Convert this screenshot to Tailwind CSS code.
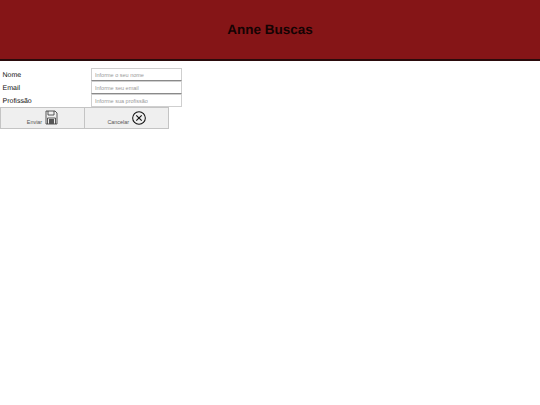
<!DOCTYPE html>
<html>
<head>
<meta charset="utf-8">
<script src="https://cdn.jsdelivr.net/npm/@tailwindcss/browser@4"></script>
</head>
<body class="bg-white font-['Liberation_Sans',Arial,sans-serif] text-black antialiased [text-rendering:geometricPrecision]">
<header class="h-[61px] bg-[#851517] border-b-2 border-[#2a0b0c] flex items-center justify-center">
  <h1 class="text-[13.5px] leading-none font-bold text-[#140303]">Anne Buscas</h1>
</header>
<main class="pt-[7px]">
  <div class="flex h-[13px] items-center"><label class="w-[91px] pl-[2.5px] pt-[2px] text-[7px] leading-none text-[#111]">Nome</label><input class="w-[91px] h-[13px] border border-[#cfcfcf] border-b-[#8a8a8a] px-[3px] text-[5.5px] placeholder:text-[#999] bg-white" placeholder="Informe o seu nome"></div>
  <div class="flex h-[13px] items-center"><label class="w-[91px] pl-[2.5px] pt-[2px] text-[7px] leading-none text-[#111]">Email</label><input class="w-[91px] h-[13px] border border-[#cfcfcf] border-b-[#8a8a8a] px-[3px] text-[5.5px] placeholder:text-[#999] bg-white" placeholder="Informe seu email"></div>
  <div class="flex h-[13px] items-center"><label class="w-[91px] pl-[2.5px] pt-[2px] text-[7px] leading-none text-[#111]">Profissão</label><input class="w-[91px] h-[13px] border border-[#cfcfcf] px-[3px] text-[5.5px] placeholder:text-[#999] bg-white" placeholder="Informe sua profissão"></div>
  <div class="flex">
    <button class="w-[85px] h-[22px] bg-[#efefef] border border-[#c4c4c4] flex items-end justify-center gap-[3px] pb-[3px] text-[5.4px] leading-none text-[#555]">
      <span>Enviar</span>
      <svg class="w-[13px] h-[15px]" viewBox="0 0 13 15" fill="none" stroke="#333" stroke-width="0.8"><path d="M1 1h9l2 2v11H1z"/><path d="M3 1v4h6V1"/><path d="M2.5 14V8h8v6"/><rect x="4" y="9" width="5" height="5" fill="#555" stroke="none"/></svg>
    </button>
    <button class="w-[85px] h-[22px] -ml-px bg-[#efefef] border border-[#c4c4c4] flex items-end justify-center gap-[2.5px] pb-[3px] text-[5.4px] leading-none text-[#555]">
      <span>Cancelar</span>
      <svg class="w-[14px] h-[14px]" viewBox="0 0 15 15" fill="none" stroke="#111" stroke-width="1.1"><circle cx="7.5" cy="7.5" r="6.8"/><path d="M4.6 4.6l5.8 5.8M10.4 4.6l-5.8 5.8" stroke-width="1.2"/></svg>
    </button>
  </div>
</main>
</body>
</html>
